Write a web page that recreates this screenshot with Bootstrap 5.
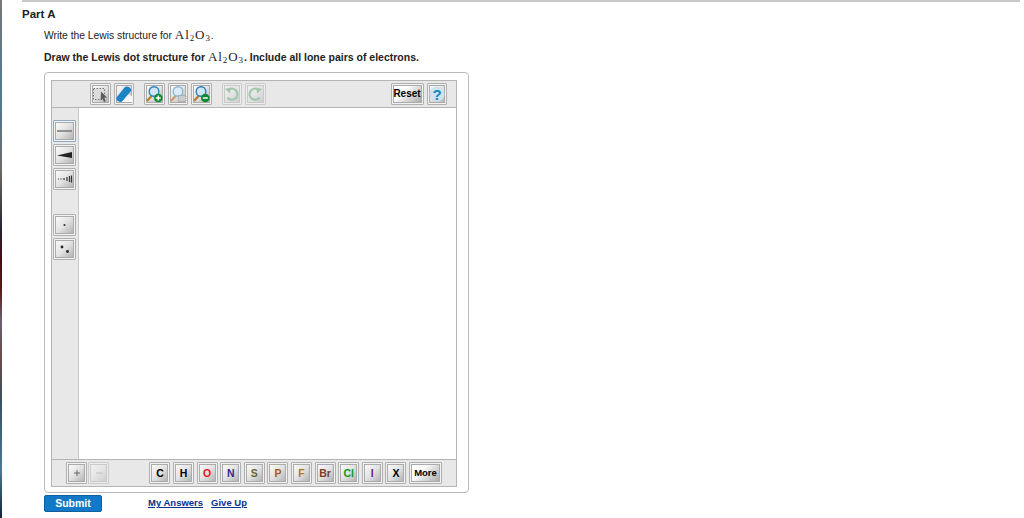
<!DOCTYPE html>
<html lang="en">
<head>
    <meta charset="UTF-8">
    <meta name="viewport" content="width=device-width, initial-scale=1.0">
    <title>Part A</title>
    <link href="https://cdn.jsdelivr.net/npm/bootstrap@5.3.0/dist/css/bootstrap.min.css" rel="stylesheet">
    <style>
        body {
            background: #fff;
            color: #222;
            font-family: "Liberation Sans", Arial, sans-serif;
            font-size: 10.3px;
            border-left: 2px solid #4a6a85;
            border-image: linear-gradient(180deg, #777 0, #4f7a95 100px, #6f6a66 170px, #2a2030 230px, #4a0a10 260px, #5a1a1a 290px, #6a6070 320px, #6a4a4a 360px, #3a5060 400px, #4a7a95 470px, #112233 518px) 1;
            min-height: 518px;
            overflow: hidden;
        }
        .top-rule {
            height: 2px;
            background: #c8c8c8;
            margin: 0 4px 0 20px;
        }
        .part-title {
            font-size: 11.5px;
            font-weight: 700;
            line-height: 14px;
            margin: 5px 0 0 20px;
        }
        .question {
            margin: 0 0 0 42px;
            line-height: 16px;
        }
        .question.first { margin-top: 6px; }
        .question.second { margin-top: 5px; font-size: 10.5px; font-weight: 700; }
        .formula {
            font-family: "Liberation Serif", serif;
            font-size: 13px;
            font-weight: 400;
            letter-spacing: .9px;
        }
        .formula sub { font-size: 9px; bottom: -.2em; }
        .applet-box {
            width: 425px;
            height: 421px;
            margin: 7px 0 0 42px;
            padding: 7px 11px 5px 6px;
            border: 1px solid #bbb;
            border-radius: 4px;
        }
        .applet {
            height: 100%;
            border: 1px solid #b4b4b4;
            background: #e8e8e8;
        }
        .bar-top { height: 27px; padding: 2px 9px 0 38px; border-bottom: 1px solid #b4b4b4; flex: none; }
        .bar-bottom { height: 27px; padding: 2px 0 0 14px; border-top: 1px solid #b4b4b4; flex: none; }
        .side-bar { width: 27px; padding: 12px 0 0 1px; border-right: 1px solid #c8c8c8; flex: none; }
        .drawing { background: #fff; }
        .tool-btn {
            width: 21px;
            height: 22px;
            padding: 0;
            flex: none;
            border: 1px solid #b0b0b0;
            border-radius: 1px;
            box-shadow: inset 0 0 0 1px #f2f2f2, inset 0 0 0 2px #ababab;
            background: linear-gradient(135deg, #fff 0%, #e2e2e2 50%, #a8a8a8 100%);
            color: #000;
            font-size: 10px;
            font-weight: 700;
            line-height: 20px;
            display: flex;
            align-items: center;
            justify-content: center;
        }
        .tool-btn svg { display: block; }
        .tool-btn.dim { opacity: .5; }
        .tool-btn.picked { border-color: #8fa9c4; }
        .bar-top .tool-btn { width: 20.5px; }
        .bar-top .reset-btn { width: 33px; }
        .side-bar .tool-btn { width: 23px; }
        .side-bar .tool-btn + .tool-btn { margin-top: 2px; }
        .side-bar .tool-btn.after-gap { margin-top: 24px; }
        .el { font-size: 10.5px; }
        .reset-btn { font-size: 10px; background: linear-gradient(135deg, #fff 0%, #fff 35%, #a0a0a0 100%); }
        .more-btn { width: 33px; font-size: 9.5px; background: linear-gradient(135deg, #fff 0%, #fff 35%, #a0a0a0 100%); }
        .gap-top { gap: 3px; }
        .gap-el { gap: 2.6px; }
        .group-gap { margin-left: 7px; }
        .charge-gap { margin-left: 1px; }
        .el-group { margin-right: 14px; }
        .c-o { color: #e8101a; }
        .c-n { color: #2b2a90; }
        .c-s { color: #66662a; }
        .c-p { color: #a85a08; }
        .c-f { color: #a87a28; }
        .c-br { color: #7a3a2a; }
        .c-cl { color: #0c9a20; }
        .c-i { color: #6a1a90; }
        .foot-row { margin: 2px 0 0 42px; }
        .submit-btn {
            width: 58px;
            height: 17px;
            padding: 0;
            border: 1px solid #0d5f9e;
            border-radius: 2px;
            background: #1279c8;
            color: #fff;
            font-size: 10.5px;
            font-weight: 700;
            line-height: 15px;
        }
        .foot-link {
            color: #0a2f90;
            font-size: 9.5px;
            font-weight: 700;
            text-decoration: underline;
        }
        .answers-link { margin-left: 46px; }
    </style>
</head>
<body>
    <div class="top-rule"></div>
    <div class="part-title">Part A</div>
    <p class="question first">Write the Lewis structure for <span class="formula">Al<sub>2</sub>O<sub>3</sub></span>.</p>
    <p class="question second">Draw the Lewis dot structure for <span class="formula">Al<sub>2</sub>O<sub>3</sub></span>. Include all lone pairs of electrons.</p>

    <div class="applet-box">
        <div class="applet d-flex flex-column">
            <div class="bar-top d-flex align-items-start gap-top">
                <button class="btn tool-btn" title="Select">
                    <svg width="18" height="18" viewBox="0 0 18 18"><rect x="2.500" y="3.500" width="11" height="11" fill="#dcdcdc" stroke="#777" stroke-dasharray="1.500 1.500"/><path d="M10 6.500l6 6-2.800.3 1.500 3.400-1.700.8-1.500-3.500-1.900 1.700z" fill="#5a5a5a"/></svg>
                </button>
                <button class="btn tool-btn" title="Erase">
                    <svg width="18" height="18" viewBox="0 0 18 18"><path d="M4 17h13v-6l-5-2z" fill="#f6f6f6"/><path d="M1.500 12.500L9.500 2.500c1-1.200 3-1.300 4.800-.2s2.300 2.800 1.500 4L7.500 16c-1 1.200-2.800 1.200-4.300.3S1 14 1.500 12.500z" fill="#1a84c4"/></svg>
                </button>
                <button class="btn tool-btn group-gap" title="Zoom in">
                    <svg width="18" height="18" viewBox="0 0 18 18"><path d="M2 16l4.500-5" stroke="#c07a30" stroke-width="2.200"/><circle cx="9" cy="6.500" r="4.800" fill="#cfe6f4" stroke="#2f7fb4" stroke-width="1.400"/><circle cx="13.300" cy="13" r="4.300" fill="#0d8a30"/><path d="M10.800 13h5M13.300 10.500v5" stroke="#fff" stroke-width="1.500"/></svg>
                </button>
                <button class="btn tool-btn" title="Zoom fit">
                    <svg width="18" height="18" viewBox="0 0 18 18"><path d="M2 16l4.500-5" stroke="#c89a68" stroke-width="2.200"/><circle cx="9" cy="6.500" r="4.800" fill="#dcecf6" stroke="#8ab8d8" stroke-width="1.400"/><rect x="9.500" y="10.500" width="7.500" height="6" fill="#ccc" stroke="#999" stroke-dasharray="1 1"/></svg>
                </button>
                <button class="btn tool-btn" title="Zoom out">
                    <svg width="18" height="18" viewBox="0 0 18 18"><path d="M2 16l4.500-5" stroke="#c07a30" stroke-width="2.200"/><circle cx="9" cy="6.500" r="4.800" fill="#cfe6f4" stroke="#2f7fb4" stroke-width="1.400"/><circle cx="13.300" cy="13" r="4.300" fill="#0d8a30"/><path d="M10.800 13h5" stroke="#fff" stroke-width="1.500"/></svg>
                </button>
                <button class="btn tool-btn group-gap dim" title="Undo">
                    <svg width="18" height="18" viewBox="0 0 18 18"><path d="M6 4.500a5.500 5.500 0 1 1-1.500 8" fill="none" stroke="#5aa870" stroke-width="2.200"/><path d="M2 4l5.500-1.500-.5 6z" fill="#5aa870"/></svg>
                </button>
                <button class="btn tool-btn dim" title="Redo">
                    <svg width="18" height="18" viewBox="0 0 18 18"><path d="M12 4.500a5.500 5.500 0 1 0 1.500 8" fill="none" stroke="#5aa870" stroke-width="2.200"/><path d="M16 4l-5.500-1.500.5 6z" fill="#5aa870"/></svg>
                </button>
                <button class="btn tool-btn reset-btn ms-auto">Reset</button>
                <button class="btn tool-btn" title="Help">
                    <svg width="18" height="18" viewBox="0 0 18 18"><circle cx="9" cy="9" r="7.500" fill="#cfe2ee"/><text x="9" y="14.500" text-anchor="middle" font-family="Liberation Sans, sans-serif" font-size="15" font-weight="700" fill="#1286c0">?</text></svg>
                </button>
            </div>

            <div class="d-flex flex-grow-1">
                <div class="side-bar d-flex flex-column">
                    <button class="btn tool-btn picked" title="Single bond">
                        <svg width="17" height="14" viewBox="0 0 17 14"><path d="M1 7h15" stroke="#777" stroke-width="1.500"/></svg>
                    </button>
                    <button class="btn tool-btn" title="Wedge bond">
                        <svg width="17" height="14" viewBox="0 0 17 14"><path d="M1 7.500L16 4v6z" fill="#222"/></svg>
                    </button>
                    <button class="btn tool-btn" title="Hash bond">
                        <svg width="17" height="14" viewBox="0 0 17 14"><path d="M2 7h1M5 6.500v1M8 6v2M11 5v4M13.500 4v6M15.500 3.500v7" stroke="#333" stroke-width="1.200"/></svg>
                    </button>
                    <button class="btn tool-btn after-gap" title="Lone electron">
                        <svg width="17" height="14" viewBox="0 0 17 14"><circle cx="8.500" cy="7" r="1.100" fill="#333"/></svg>
                    </button>
                    <button class="btn tool-btn" title="Electron pair">
                        <svg width="17" height="16" viewBox="0 0 17 16"><circle cx="6" cy="6" r="1.400" fill="#222"/><circle cx="11.500" cy="10.500" r="1.400" fill="#222"/></svg>
                    </button>
                </div>
                <div class="drawing flex-grow-1"></div>
            </div>

            <div class="bar-bottom d-flex align-items-start">
                <button class="btn tool-btn" title="Increase charge">
                    <svg width="12" height="12" viewBox="0 0 12 12"><path d="M3 6h6M6 3v6" stroke="#666"/></svg>
                </button>
                <button class="btn tool-btn dim charge-gap" title="Decrease charge">
                    <svg width="12" height="12" viewBox="0 0 12 12"><path d="M3 6h6" stroke="#999"/></svg>
                </button>
                <div class="d-flex gap-el ms-auto el-group">
                    <button class="btn tool-btn el">C</button>
                    <button class="btn tool-btn el">H</button>
                    <button class="btn tool-btn el c-o">O</button>
                    <button class="btn tool-btn el c-n">N</button>
                    <button class="btn tool-btn el c-s">S</button>
                    <button class="btn tool-btn el c-p">P</button>
                    <button class="btn tool-btn el c-f">F</button>
                    <button class="btn tool-btn el c-br">Br</button>
                    <button class="btn tool-btn el c-cl">Cl</button>
                    <button class="btn tool-btn el c-i">I</button>
                    <button class="btn tool-btn el">X</button>
                    <button class="btn tool-btn more-btn">More</button>
                </div>
            </div>
        </div>
    </div>

    <div class="foot-row d-flex align-items-center">
        <button class="btn submit-btn">Submit</button>
        <a class="foot-link answers-link" href="#">My Answers</a>
        <a class="foot-link ms-2" href="#">Give Up</a>
    </div>
    <script src="https://cdn.jsdelivr.net/npm/bootstrap@5.3.0/dist/js/bootstrap.bundle.min.js"></script>
</body>
</html>
